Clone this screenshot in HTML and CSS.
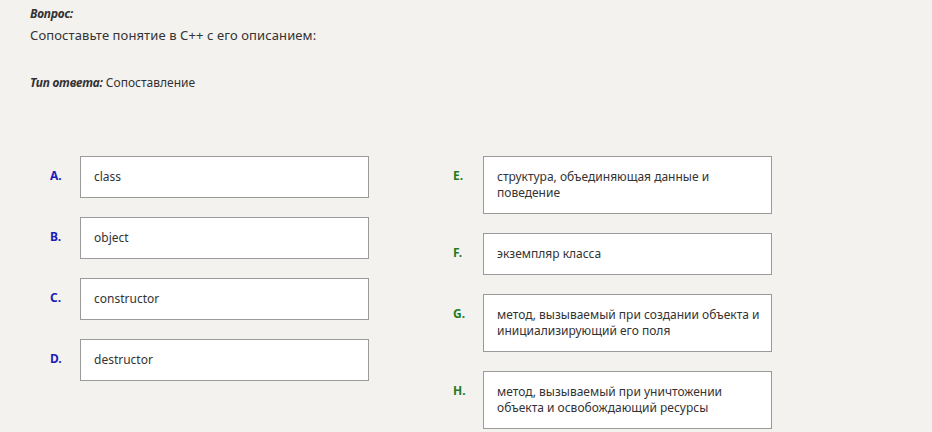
FILE: index.html
```html
<!DOCTYPE html>
<html lang="ru">
<head>
  <meta charset="UTF-8">
  <title>Вопрос</title>
  <link rel="stylesheet" href="styles.css">
</head>
<body>
  <div class="question">
    <div class="q-label">Вопрос:</div>
    <div class="q-text">Сопоставьте понятие в С++ с его описанием:</div>
    <div class="q-type"><span class="q-label">Тип ответа:</span> Сопоставление</div>
  </div>

  <div class="match">
    <div class="column">
      <div class="item"><span class="letter left">A.</span><div class="box">class</div></div>
      <div class="item"><span class="letter left">B.</span><div class="box">object</div></div>
      <div class="item"><span class="letter left">C.</span><div class="box">constructor</div></div>
      <div class="item"><span class="letter left">D.</span><div class="box">destructor</div></div>
    </div>
    <div class="column">
      <div class="item"><span class="letter right">E.</span><div class="box">структура, объединяющая данные и поведение</div></div>
      <div class="item"><span class="letter right">F.</span><div class="box">экземпляр класса</div></div>
      <div class="item"><span class="letter right">G.</span><div class="box">метод, вызываемый при создании объекта и инициализирующий его поля</div></div>
      <div class="item"><span class="letter right">H.</span><div class="box">метод, вызываемый при уничтожении объекта и освобождающий ресурсы</div></div>
    </div>
  </div>
</body>
</html>
```

FILE: styles.css
```css
body {
  margin: 0;
  padding: 5px 30px 0;
  background: #f3f2ef;
  color: #333;
  font-family: "Noto Sans", "Open Sans", sans-serif;
  font-size: 12px;
}
.q-label {
  font-weight: bold;
  font-style: italic;
  font-size: 12px;
  letter-spacing: -0.2px;
}
.q-text {
  font-size: 13px;
  margin-top: 4px;
  letter-spacing: 0.1px;
}
.q-type {
  margin-top: 30px;
}
.match {
  display: flex;
  margin-top: 65px;
}
.column {
  display: flex;
  flex-direction: column;
  gap: 19px;
  width: 403px;
}
.item {
  display: flex;
  align-items: flex-start;
}
.letter {
  width: 50px;
  padding-left: 20px;
  box-sizing: border-box;
  font-weight: bold;
  padding-top: 12px;
  line-height: 16px;
}
.left {
  color: #1c1cb8;
}
.right {
  color: #1e7d1e;
}
.box {
  width: 289px;
  box-sizing: border-box;
  background: #fff;
  border: 1px solid #9a9a9a;
  padding: 12px 4px 12px 13px;
  line-height: 16px;
}
```
